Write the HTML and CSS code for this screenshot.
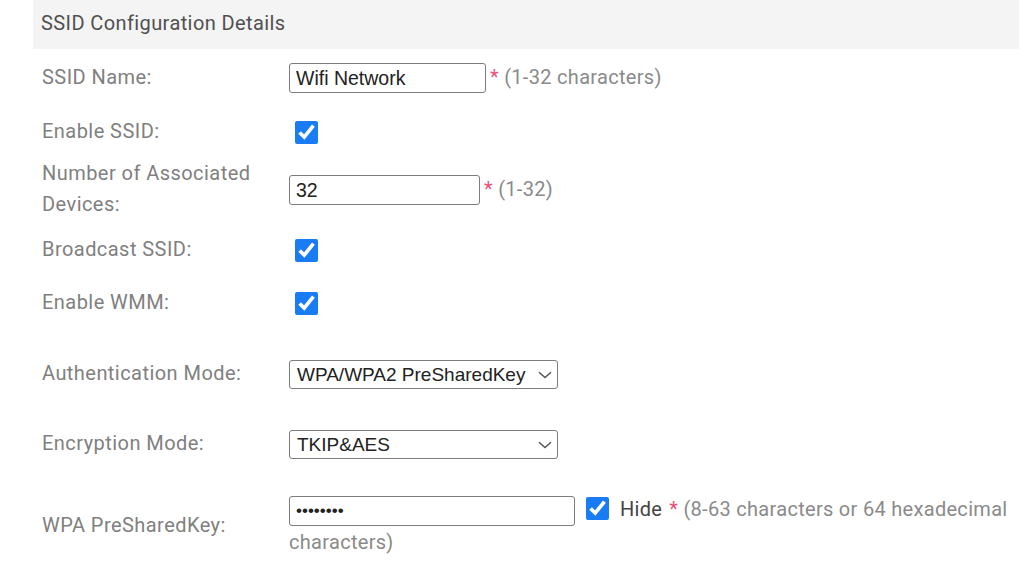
FILE: index.html
```html
<!DOCTYPE html>
<html lang="en">
<head>
	<meta charset="UTF-8">
	<title>SSID Configuration</title>
	<link rel="stylesheet" href="styles.css">
</head>
<body>
	<section class="panel">
		<header class="panelTitle">SSID Configuration Details</header>
		<form class="formList" action="">
			<div class="row h56">
				<label class="lbl">SSID Name:</label>
				<div class="val">
					<input type="text" class="ipt iptName" value="Wifi Network"><span class="star">*</span> <span class="tip">(1-32 characters)</span>
				</div>
			</div>
			<div class="row h52">
				<label class="lbl">Enable SSID:</label>
				<div class="val"><input type="checkbox" class="chk" checked></div>
			</div>
			<div class="row h64">
				<label class="lbl">Number of Associated Devices:</label>
				<div class="val">
					<input type="text" class="ipt iptNum" value="32"><span class="star">*</span> <span class="tip">(1-32)</span>
				</div>
			</div>
			<div class="row h56">
				<label class="lbl">Broadcast SSID:</label>
				<div class="val"><input type="checkbox" class="chk" checked></div>
			</div>
			<div class="row h50">
				<label class="lbl">Enable WMM:</label>
				<div class="val"><input type="checkbox" class="chk" checked></div>
			</div>
			<div class="row h92">
				<label class="lbl">Authentication Mode:</label>
				<div class="val">
					<span class="selWrap">
						<select class="sel">
							<option>WPA/WPA2 PreSharedKey</option>
						</select>
						<svg class="arrow" width="14" height="8" viewBox="0 0 14 8"><path d="M1 1.2L7 6.5L13 1.2" fill="none" stroke="#555" stroke-width="1.5"/></svg>
					</span>
				</div>
			</div>
			<div class="row h48">
				<label class="lbl">Encryption Mode:</label>
				<div class="val">
					<span class="selWrap">
						<select class="sel">
							<option>TKIP&amp;AES</option>
						</select>
						<svg class="arrow" width="14" height="8" viewBox="0 0 14 8"><path d="M1 1.2L7 6.5L13 1.2" fill="none" stroke="#555" stroke-width="1.5"/></svg>
					</span>
				</div>
			</div>
			<div class="row rowKey">
				<label class="lbl">WPA PreSharedKey:</label>
				<div class="val valFlow">
					<input type="password" class="ipt iptKey" value="12345678"><input type="checkbox" class="chk chkHide" checked><span class="hide">Hide</span><span class="star">*</span> <span class="tip">(8-63 characters or 64 hexadecimal characters)</span>
				</div>
			</div>
		</form>
	</section>
</body>
</html>
```

FILE: styles.css
```css
body{
	margin:0;
	background:#fff;
	font-family:Roboto, "Liberation Sans", sans-serif;
}
input, select{
	margin:0;
	outline:none;
}
.panel{
	width:986px;
	margin-left:33px;
}
.panelTitle{
	height:49px;
	line-height:46px;
	padding-left:8px;
	background:#f4f4f4;
	color:#505050;
	font-size:20px;
	letter-spacing:0.4px;
}
.row{
	display:grid;
	grid-template-columns:256px 1fr;
	align-items:center;
}
.h48{ height:48px; }
.h50{ height:50px; }
.h52{ height:52px; }
.h56{ height:56px; }
.h64{ height:64px; }
.h92{ height:92px; }
.rowKey{
	padding-top:26px;
}
.lbl{
	padding-left:9px;
	padding-right:4px;
	font-size:20px;
	letter-spacing:0.45px;
	line-height:31px;
	color:#808080;
}
.val{
	font-size:20px;
	letter-spacing:0.3px;
	line-height:32px;
	color:#8a8a8a;
}
.ipt{
	box-sizing:border-box;
	height:30px;
	padding:0 6px;
	border:1px solid #7c7c7c;
	border-radius:3px;
	font-family:"Liberation Sans", Arial, sans-serif;
	font-size:19.5px;
	letter-spacing:0;
	color:#222;
	vertical-align:middle;
}
.iptName{ width:197px; }
.iptNum{ width:191px; }
.iptKey{
	width:286px;
	font-size:17px;
}
.selWrap{
	position:relative;
	display:inline-block;
	vertical-align:middle;
	line-height:0;
}
.sel{
	box-sizing:border-box;
	width:269px;
	height:29px;
	padding:0 24px 0 7px;
	border:1px solid #7c7c7c;
	border-radius:3px;
	background:#fff;
	font-family:"Liberation Sans", Arial, sans-serif;
	font-size:19px;
	letter-spacing:0;
	color:#222;
	appearance:none;
	-webkit-appearance:none;
}
.arrow{
	position:absolute;
	right:6px;
	top:11px;
	pointer-events:none;
}
.chk{
	width:23px;
	height:23px;
	margin:0 0 0 6px;
	accent-color:#1a7cf5;
	vertical-align:middle;
}
.chkHide{
	margin:0 11px;
	position:relative;
	top:-2px;
}
.star{
	margin-left:4px;
	color:#e8507a;
}
.hide{
	color:#444;
	margin-right:3px;
}
```
